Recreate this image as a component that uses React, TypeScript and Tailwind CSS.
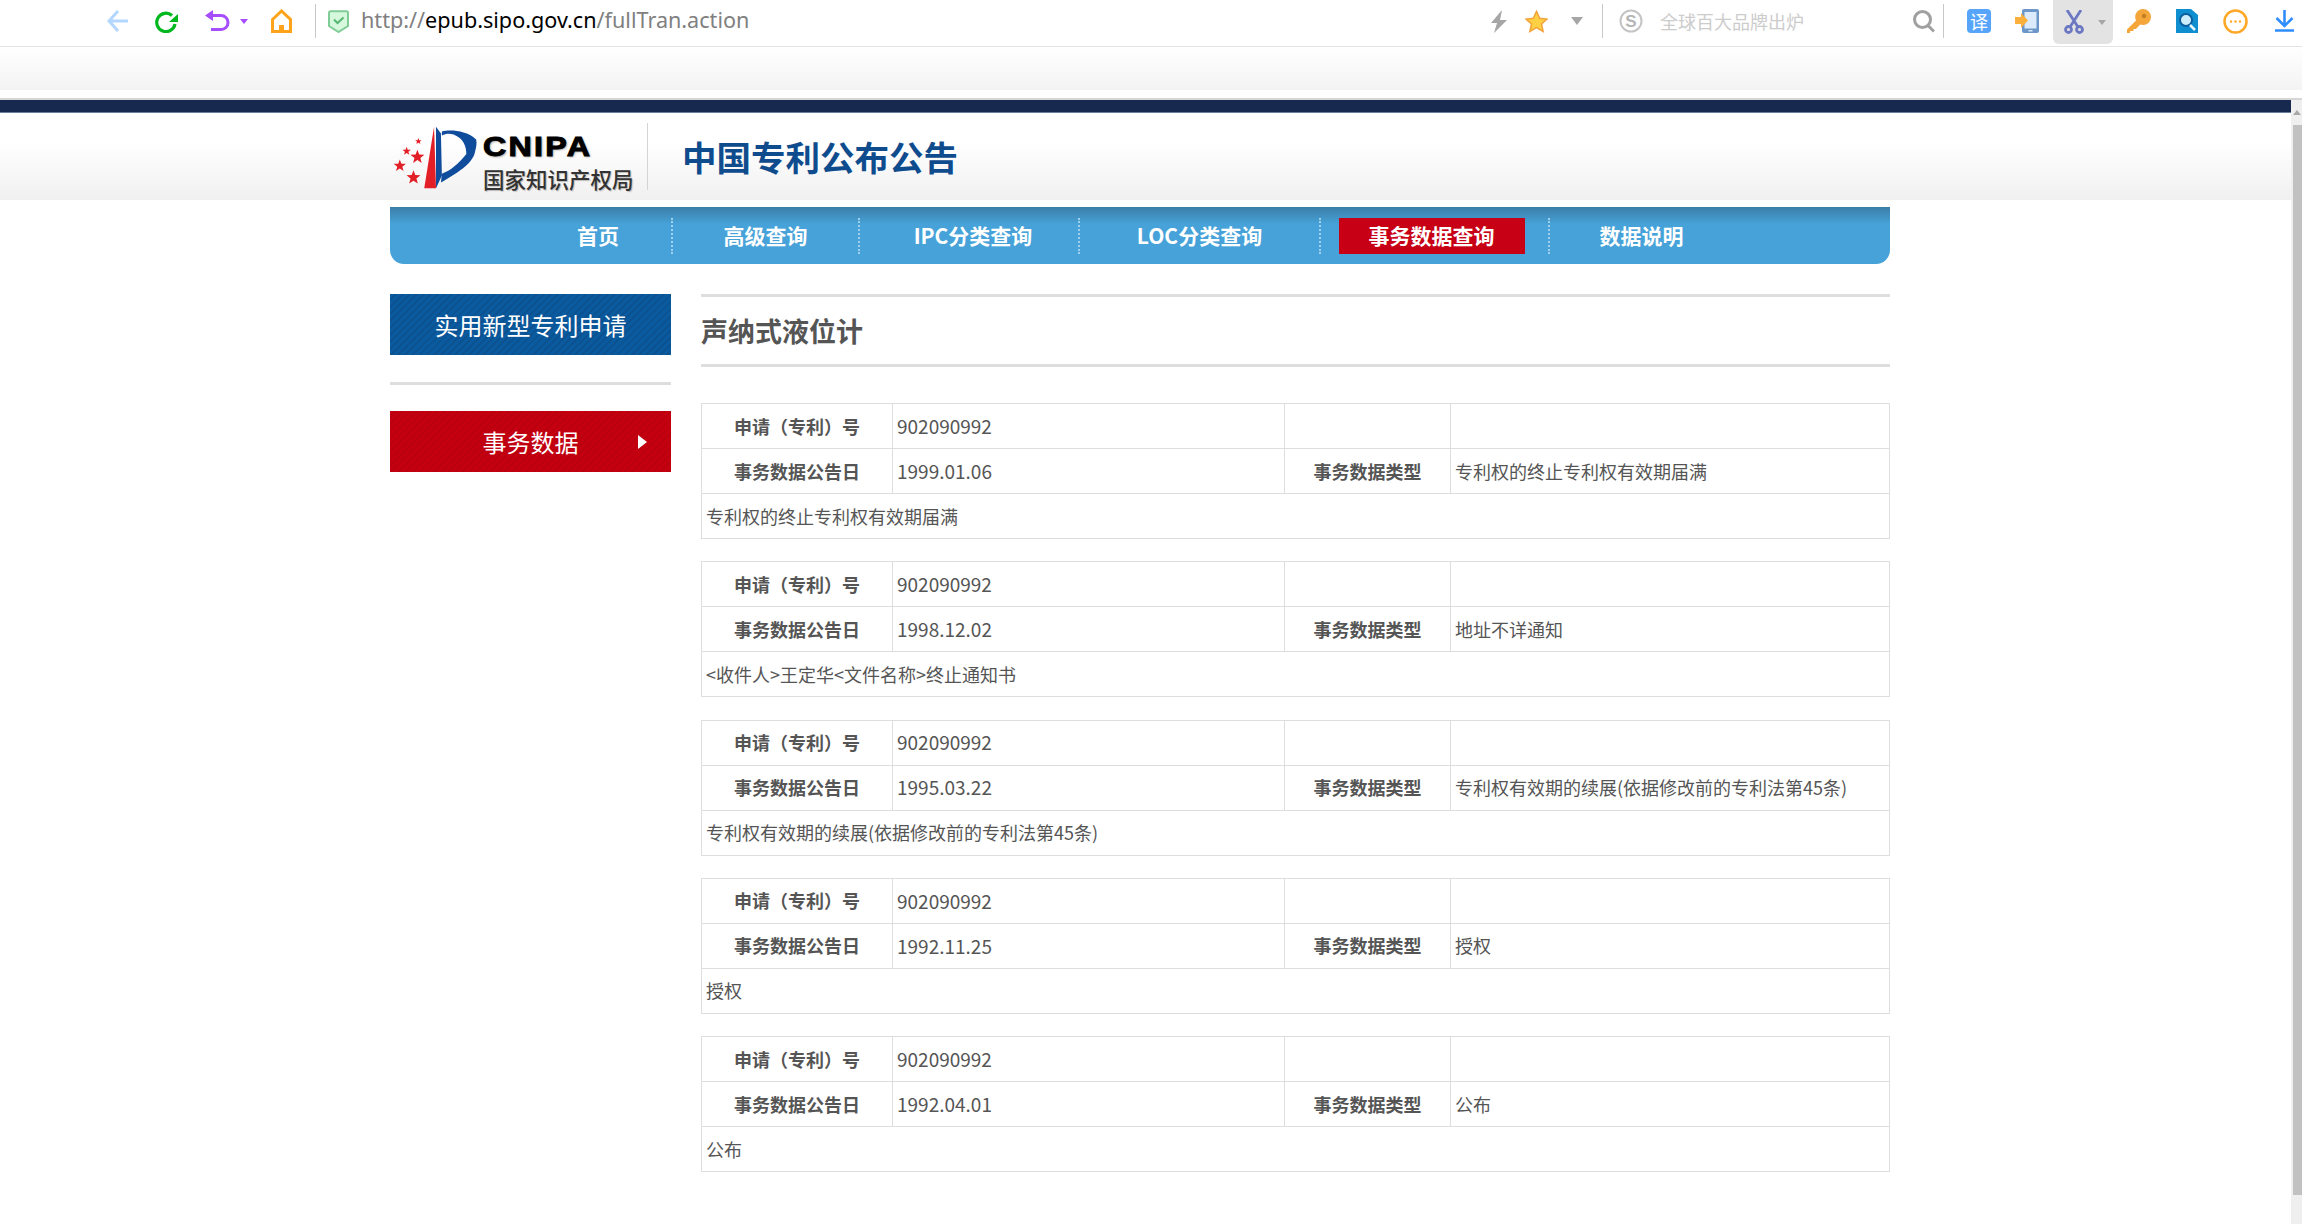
const FONT = "font-['Noto_Sans_CJK_SC','Noto_Sans',sans-serif]"

const navItems = [
  { label: "首页", width: "w-[283px]", pad: "pl-[135px]" },
  { label: "高级查询", width: "w-[187px]", pad: "" },
  { label: "IPC分类查询", width: "w-[220px]", pad: "pl-[8px]" },
  { label: "LOC分类查询", width: "w-[241px]", pad: "" },
  { label: "事务数据查询", width: "w-[229px]", pad: "pr-[6px]", active: true },
  { label: "数据说明", width: "w-[183px]", pad: "" },
]

const records = [
  { date: "1999.01.06", type: "专利权的终止专利权有效期届满", note: "专利权的终止专利权有效期届满" },
  { date: "1998.12.02", type: "地址不详通知", note: "<收件人>王定华<文件名称>终止通知书" },
  { date: "1995.03.22", type: "专利权有效期的续展(依据修改前的专利法第45条)", note: "专利权有效期的续展(依据修改前的专利法第45条)" },
  { date: "1992.11.25", type: "授权", note: "授权" },
  { date: "1992.04.01", type: "公布", note: "公布" },
]

function starPoints(cx: number, cy: number, r: number) {
  const pts: string[] = []
  for (let i = 0; i < 10; i++) {
    const rad = i % 2 === 0 ? r : r * 0.42
    const a = -Math.PI / 2 + (i * Math.PI) / 5
    pts.push(`${cx + rad * Math.cos(a)},${cy + rad * Math.sin(a)}`)
  }
  return pts.join(" ")
}

function BackIcon() {
  return (
    <svg width="21" height="22" viewBox="0 0 21 22" fill="none" stroke="#b3d7ff" strokeWidth="3">
      <path d="M21 11H3M11 1 2 11l9 10" />
    </svg>
  )
}

function RefreshIcon() {
  return (
    <svg width="23" height="23" viewBox="0 0 23 23" fill="none">
      <path d="M17 5.500A9.200 9.200 0 1 0 20 14" stroke="#00b81e" strokeWidth="3.200" />
      <path d="M14 12h9V4z" fill="#00b81e" />
    </svg>
  )
}

function UndoIcon() {
  return (
    <svg width="25" height="22" viewBox="0 0 25 22" fill="none">
      <path d="M6 5.500h10a7 7 0 0 1 0 14H6" stroke="#a64dff" strokeWidth="3" />
      <path d="M8 0v11L0 5.500z" fill="#a64dff" />
    </svg>
  )
}

function HomeIcon() {
  return (
    <svg width="21" height="24" viewBox="0 0 21 24" fill="none" stroke="#ffa31a" strokeWidth="3">
      <path d="M1.500 10.500 10.500 2l9 8.500v12h-18z" />
      <rect x="8" y="16" width="5" height="7" fill="#ffa31a" stroke="none" />
    </svg>
  )
}

function ShieldIcon() {
  return (
    <svg width="21" height="23" viewBox="0 0 21 23">
      <path d="M2.500 1.200h16a1.500 1.500 0 0 1 1.500 1.500V16l-9.500 6L1 16V2.700a1.500 1.500 0 0 1 1.500-1.500z" fill="#d6f8dd" stroke="#7fcc96" strokeWidth="2" />
      <path d="m6 9.500 3.500 3.500 6-5.500" fill="none" stroke="#57b874" strokeWidth="2" />
    </svg>
  )
}

function BoltIcon() {
  return (
    <svg width="16" height="23" viewBox="0 0 16 23">
      <path d="M11 0 0 13h6l-3 10 13-13h-7z" fill="#a6a6a6" />
    </svg>
  )
}

function StarIcon() {
  return (
    <svg width="23" height="23" viewBox="0 0 24 24">
      <path d="m12 1.500 3.300 7.200 7.700.8-5.800 5.100 1.700 7.700-6.900-4-6.900 4 1.700-7.700L1 9.500l7.700-.8z" fill="#ffd044" stroke="#f2a33a" strokeWidth="1.600" />
    </svg>
  )
}

function SearchEngineIcon() {
  return (
    <svg width="24" height="24" viewBox="0 0 24 24" fill="none">
      <circle cx="12" cy="12" r="10.500" stroke="#c4c4c4" strokeWidth="2" />
      <text x="12" y="18" textAnchor="middle" fontSize="17" fontWeight="700" fill="#b5b5b5" fontFamily="Liberation Sans">S</text>
    </svg>
  )
}

function TranslateIcon() {
  return (
    <div className="flex h-[24px] w-[24px] items-center justify-center rounded-[4px] bg-[#57a5fb] text-[18px] leading-none text-white">
      译
    </div>
  )
}

function PhoneIcon() {
  return (
    <svg width="24" height="24" viewBox="0 0 24 24">
      <rect x="7" y="0" width="17" height="24" rx="2" fill="#6e97c9" />
      <rect x="9.500" y="3" width="12" height="16.500" fill="#dcebfb" />
      <rect x="13.500" y="21" width="4" height="1.500" fill="#dcebfb" />
      <path d="M0 8h6V4l7 7.500L6 19v-4H0z" fill="#fbb03b" />
    </svg>
  )
}

function ScissorsIcon() {
  return (
    <svg width="20" height="24" viewBox="0 0 20 24" fill="none" stroke="#6c78c2" strokeWidth="2.800">
      <path d="M3 0 14 17M17 0 6 17" />
      <circle cx="4.500" cy="19.500" r="3" />
      <circle cx="15.500" cy="19.500" r="3" />
    </svg>
  )
}

function KeyIcon() {
  return (
    <svg width="24" height="24" viewBox="0 0 24 24">
      <path d="M16 0a8 8 0 0 1 0 16c-1 0-2-.200-2.800-.500L9 20H6.500v2H3v2H0v-3.500l9-9A8 8 0 0 1 16 0z" fill="#f4a63b" />
      <circle cx="17" cy="7" r="2.200" fill="#c47e22" />
    </svg>
  )
}

function ReaderIcon() {
  return (
    <svg width="22" height="24" viewBox="0 0 22 24">
      <path d="M0 0h15l7 6v18H0z" fill="#0f8fd0" />
      <circle cx="10" cy="11" r="6" fill="#cdeefc" stroke="#0b5f9e" strokeWidth="2" />
      <path d="m14 16 5 5" stroke="#e8f6fd" strokeWidth="2.500" />
    </svg>
  )
}

function MoreIcon() {
  return (
    <svg width="25" height="25" viewBox="0 0 25 25" fill="none">
      <circle cx="12.500" cy="12.500" r="11" stroke="#ffa726" strokeWidth="2.500" />
      <circle cx="8" cy="12.500" r="1.200" fill="#ffa726" />
      <circle cx="12.500" cy="12.500" r="1.200" fill="#ffa726" />
      <circle cx="17" cy="12.500" r="1.200" fill="#ffa726" />
    </svg>
  )
}

function DownloadIcon() {
  return (
    <svg width="19" height="22" viewBox="0 0 19 22" fill="none" stroke="#2f8dff" strokeWidth="2.600">
      <path d="M9.500 0v15M1.500 8l8 8 8-8M0 20.500h19" />
    </svg>
  )
}

function Caret({ className }: { className: string }) {
  return <div className={`h-0 w-0 border-x-transparent ${className}`} />
}

function Divider({ className }: { className: string }) {
  return <div className={`h-[34px] w-px shrink-0 bg-[#c8c8c8] ${className}`} />
}

function BrowserBar() {
  return (
    <div className="flex h-[47px] items-center border-b border-[#e4e4e4] bg-white pb-[4px] pl-[107px] pr-[8px]">
      <BackIcon />
      <div className="ml-[27px]"><RefreshIcon /></div>
      <div className="ml-[27px]"><UndoIcon /></div>
      <div className="ml-[10px]"><Caret className="border-x-[4px] border-t-[5px] border-t-[#a64dff]" /></div>
      <div className="ml-[23px]"><HomeIcon /></div>
      <Divider className="ml-[23px]" />
      <div className="ml-[12px]"><ShieldIcon /></div>
      <div className="ml-[12px] -mt-[1px] whitespace-nowrap font-['Noto_Sans',sans-serif] text-[21.600px] text-[#808080]">
        http://<span className="text-black">epub.sipo.gov.cn</span>/fullTran.action
      </div>

      <div className="ml-auto flex h-full items-center">
        <BoltIcon />
        <div className="ml-[18px]"><StarIcon /></div>
        <div className="ml-[23px]"><Caret className="border-x-[6px] border-t-[8px] border-t-[#a6a6a6]" /></div>
        <Divider className="ml-[19px]" />
        <div className="ml-[16px]"><SearchEngineIcon /></div>
        <div className={`ml-[17px] w-[253px] text-[18px] text-[#cccccc] ${FONT}`}>全球百大品牌出炉</div>
        <svg width="22" height="23" viewBox="0 0 22 23" fill="none" stroke="#a0a0a0" strokeWidth="3">
          <circle cx="9.500" cy="9.500" r="8" />
          <path d="m15 15.500 6 6" />
        </svg>
        <Divider className="ml-[8px]" />
        <div className="ml-[23px]"><TranslateIcon /></div>
        <div className="ml-[24px]"><PhoneIcon /></div>
        <div className="ml-[14px] flex h-[44px] w-[60px] self-start items-center rounded-b-[6px] bg-[#e3e3e3] pl-[11px]">
          <ScissorsIcon />
          <div className="ml-[14px]"><Caret className="border-x-[4px] border-t-[5px] border-t-[#a6a6a6]" /></div>
        </div>
        <div className="ml-[14px]"><KeyIcon /></div>
        <div className="ml-[25px]"><ReaderIcon /></div>
        <div className="ml-[25px]"><MoreIcon /></div>
        <div className="ml-[27px]"><DownloadIcon /></div>
      </div>
    </div>
  )
}

function Logo() {
  return (
    <div className="flex h-[72px] w-[257px] shrink-0 items-center">
      <svg width="93" height="72" viewBox="0 0 95 72" className="shrink-0">
        <path d="M45 5 35 68h12z" fill="#e21f26" />
        <path d="M47 5l5 7 1 43-6 13z" fill="#0f4c9c" />
        <path d="M53 10C60 8 77 8 88 18c1 4 0 8-1 12-2 13-20 23-35 32l1-9C62 50 70 43 78 33c0-8-3-16-13-20-4-1-8-1-12 1z" fill="#0f4c9c" />
        <polygon points={starPoints(29, 20, 3.500)} fill="#e21f26" />
        <polygon points={starPoints(17, 30, 4.500)} fill="#e21f26" />
        <polygon points={starPoints(28, 36, 7.500)} fill="#e21f26" />
        <polygon points={starPoints(10, 45, 6.500)} fill="#e21f26" />
        <polygon points={starPoints(24, 57, 7.500)} fill="#e21f26" />
      </svg>
      <div className="flex flex-col pt-[10px]">
        <div className="origin-left scale-x-[1.15] font-['Liberation_Sans',sans-serif] text-[28px] font-bold leading-[34px] tracking-[2px] text-black [-webkit-text-stroke:1px_black] [text-shadow:1px_1px_2px_#999]">
          CNIPA
        </div>
        <div className={`whitespace-nowrap text-[21.500px] font-medium leading-[30px] text-[#333] [text-shadow:1px_1px_1px_#bbb] ${FONT}`}>
          国家知识产权局
        </div>
      </div>
    </div>
  )
}

function NavBar() {
  return (
    <div className="flex h-[57px] items-center rounded-b-[14px] bg-gradient-to-b from-[#3b7ea8] via-[#46a2d8] via-[30%] to-[#46a2d8]">
      {navItems.map((item, i) => (
        <div
          key={item.label}
          className={`relative flex h-[36px] items-center justify-center ${item.width} ${item.pad} ${i < navItems.length - 1 ? "border-r-2 border-dotted border-[#9fd0ec]" : ""}`}
        >
          {item.active ? (
            <div className="flex h-[36px] w-[186px] items-center justify-center bg-[#c80015] text-[21px] font-bold text-white">
              {item.label}
            </div>
          ) : (
            <span className="whitespace-nowrap text-[21px] font-bold text-white">{item.label}</span>
          )}
        </div>
      ))}
    </div>
  )
}

function Sidebar() {
  return (
    <div className="w-[281px] shrink-0">
      <div className="flex h-[61px] items-center justify-center bg-[#0b5a9e] bg-[repeating-linear-gradient(135deg,#0a5a9f_0px,#0a5a9f_3px,#0c5290_3px,#0c5290_5px)] text-[24px] text-white">
        实用新型专利申请
      </div>
      <div className="mt-[27px] h-[3px] bg-[#dedede]" />
      <div className="relative mt-[26px] flex h-[61px] items-center justify-center bg-[#c40010] bg-[repeating-linear-gradient(135deg,#c40010_0px,#c40010_3px,#bb0010_3px,#bb0010_5px)] text-[24px] text-white">
        事务数据
        <div className="absolute right-[24px] top-[24px] h-0 w-0 border-y-[7px] border-l-[9px] border-y-transparent border-l-white" />
      </div>
    </div>
  )
}

function RecordTable({ date, type, note }: { date: string; type: string; note: string }) {
  const labelCls = "border border-[#dedede] text-center font-bold text-[#555]"
  const valueCls = "border border-[#dedede] pl-[4px] text-[#555]"
  return (
    <table className="mb-[22.250px] w-full table-fixed border-collapse text-[18px]">
      <colgroup>
        <col className="w-[191px]" />
        <col className="w-[392px]" />
        <col className="w-[166px]" />
        <col />
      </colgroup>
      <tbody>
        <tr className="h-[45px]">
          <td className={labelCls}>申请（专利）号</td>
          <td className={`${valueCls} text-[19px]`}>902090992</td>
          <td className={labelCls}></td>
          <td className={valueCls}></td>
        </tr>
        <tr className="h-[45px]">
          <td className={labelCls}>事务数据公告日</td>
          <td className={`${valueCls} text-[19px]`}>{date}</td>
          <td className={labelCls}>事务数据类型</td>
          <td className={valueCls}>{type}</td>
        </tr>
        <tr className="h-[45px]">
          <td colSpan={4} className={valueCls}>{note}</td>
        </tr>
      </tbody>
    </table>
  )
}

export default function App() {
  return (
    <div className={`h-[1224px] w-[2302px] overflow-hidden bg-white ${FONT}`}>
      <BrowserBar />
      <div className="h-[43px] bg-gradient-to-b from-white to-[#f3f3f3]" />
      <div className="h-[8px] bg-white" />
      <div className="h-[2px] bg-[#d6d6d6]" />

      <div className="flex h-[1124px]">
        <div className="min-w-0 flex-1">
          <div className="h-[13px] border-b border-[#6d7d9c] bg-[#18294f]" />
          <div className="h-[87px] bg-gradient-to-b from-white via-white via-[35%] to-[#f0f0f0]">
            <div className="ml-[390px] flex h-full items-center">
              <Logo />
              <div className="h-[67px] w-px bg-[#d4d4d4]" />
              <div className="ml-[34px] whitespace-nowrap text-[34.500px] font-bold text-[#0f4c8e]">中国专利公布公告</div>
            </div>
          </div>

          <div className="ml-[390px] mt-[7px] w-[1500px]">
            <NavBar />
            <div className="mt-[30px] flex">
              <Sidebar />
              <div className="ml-[30px] min-w-0 flex-1">
                <div className="flex h-[73px] items-center border-y-[3px] border-[#dedede] pt-[2px] text-[27px] font-bold text-[#555]">
                  声纳式液位计
                </div>
                <div className="mt-[36px]">
                  {records.map((r) => (
                    <RecordTable key={r.date} {...r} />
                  ))}
                </div>
              </div>
            </div>
          </div>
        </div>

        <div className="flex w-[11px] shrink-0 flex-col bg-[#efefef]">
          <div className="flex h-[25px] items-center justify-center">
            <div className="h-0 w-0 border-x-[4px] border-b-[5px] border-x-transparent border-b-[#a8a8a8]" />
          </div>
          <div className="ml-[2px] h-[1070px] bg-[#c1c1c1]" />
        </div>
      </div>
    </div>
  )
}
